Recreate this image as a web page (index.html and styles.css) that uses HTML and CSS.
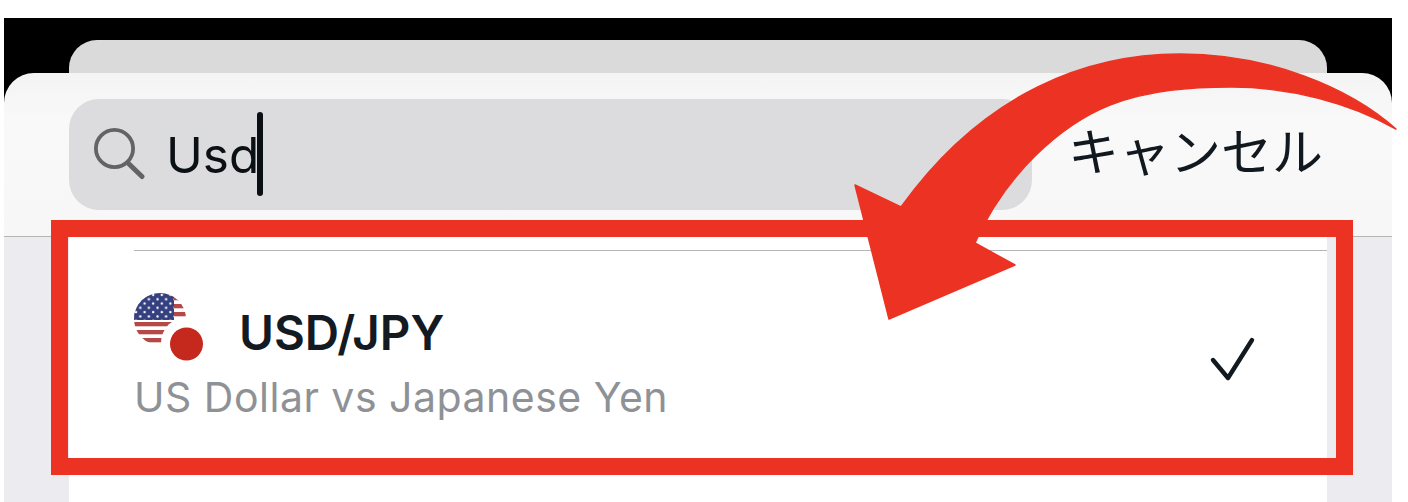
FILE: index.html
```html
<!DOCTYPE html>
<html lang="ja">
<head>
<meta charset="UTF-8" />
<meta name="viewport" content="width=device-width, initial-scale=1" />
<title>USD/JPY</title>
<link rel="stylesheet" href="styles.css">
</head>
<body>

  <div id="screen">
    <div id="back-sheet"></div>

    <div id="sheet">
      <div id="search">
        <svg class="search-icon" width="56" height="56" viewBox="0 0 56 56" aria-hidden="true">
          <circle cx="22.5" cy="24.5" r="18.6" fill="none" stroke="#636366" stroke-width="3.8" />
          <line x1="36" y1="39" x2="50" y2="52.5" stroke="#636366" stroke-width="5" stroke-linecap="round" />
        </svg>
        <span id="search-text">Usd</span>
        <span id="caret"></span>
      </div>
      <div id="cancel">キャンセル</div>
    </div>

    <div id="results">
      <div id="list">
        <div class="item">
          <div class="item-main">
            <svg class="flag" width="80" height="78" viewBox="0 0 80 78" aria-hidden="true">
              <defs>
                <clipPath id="us-clip"><circle cx="26" cy="26" r="26" /></clipPath>
                <pattern id="stars" width="8.600" height="8.600" patternUnits="userSpaceOnUse">
                  <circle cx="2" cy="2" r="1.200" fill="#fff" />
                  <circle cx="6.300" cy="6.300" r="1.200" fill="#fff" />
                </pattern>
              </defs>
              <g clip-path="url(#us-clip)">
                <rect width="52" height="52" fill="#fff" />
                <rect y="3" width="52" height="4.300" fill="#b5494a" />
                <rect y="11" width="52" height="4.300" fill="#b5494a" />
                <rect y="19" width="52" height="4.300" fill="#b5494a" />
                <rect y="29" width="52" height="4.300" fill="#b5494a" />
                <rect y="37" width="52" height="4.300" fill="#b5494a" />
                <rect y="45" width="52" height="4.300" fill="#b5494a" />
                <rect width="40" height="27" fill="#34407f" />
                <rect width="40" height="27" fill="url(#stars)" />
              </g>
              <circle cx="53" cy="50" r="26" fill="#fff" />
              <circle cx="52.500" cy="51" r="16.500" fill="#c5281c" />
            </svg>
            <span class="pair">USD/JPY</span>
          </div>
          <div class="pair-name">US Dollar vs Japanese Yen</div>
          <svg class="check" width="52" height="52" viewBox="0 0 52 52" aria-hidden="true">
            <polyline points="4,25 19,43 43,5" fill="none" stroke="#12191f" stroke-width="4.4" stroke-linecap="round" stroke-linejoin="round" />
          </svg>
        </div>
      </div>
    </div>
  </div>

  <!-- annotation drawn on top of the screenshot -->
  <div id="highlight"></div>
  <svg id="arrow" width="1408" height="502" viewBox="0 0 1408 502" aria-hidden="true">
    <path fill="#ec3323" stroke="#ec3323" stroke-width="1.500" stroke-linejoin="round" d="M1396 129 C1350 88 1270 54 1180 54 C1090 54 985 90 901 207 L855 185 L889 319 L1015 265 L975 243 C1005 175 1060 125 1110 105 C1150 90 1190 87 1232 87 C1290 87 1350 103 1396 129 Z" />
  </svg>

</body>
</html>
```

FILE: styles.css
```css
html, body {
  margin: 0;
  padding: 0;
  height: 100%;
  background: white;
  overflow: hidden;
  font-family: Inter, "Noto Sans CJK JP", sans-serif;
}

#screen {
  margin: 18px 16px 0 4px;
  height: 484px;
  background: black;
  display: flex;
  flex-direction: column;
  overflow: hidden;
}

#back-sheet {
  flex: none;
  height: 33px;
  margin: 22px 65px 0;
  background: #d9dad9;
  border-radius: 28px 28px 0 0;
}

#sheet {
  flex: none;
  box-sizing: border-box;
  height: 164px;
  padding: 26px 69px 0 65px;
  display: flex;
  align-items: flex-start;
  justify-content: space-between;
  background: linear-gradient(#f4f4f5, #f9f9f9 30%, #f7f7f8);
  border-bottom: 1px solid #b5b5b5;
  border-radius: 30px 30px 0 0;
}

#search {
  box-sizing: border-box;
  width: 963px;
  height: 111px;
  padding-left: 23px;
  display: flex;
  align-items: center;
  background: #dcdcde;
  border-radius: 30px;
}

.search-icon {
  flex: none;
  margin-top: -6px;
}

#search-text {
  margin-left: 18px;
  font-size: 49.500px;
  color: #0b1015;
}

#caret {
  width: 6px;
  height: 84px;
  margin-left: -2px;
  margin-bottom: 2px;
  background: #0b1015;
  border-radius: 3px;
}

#cancel {
  margin-top: 17px;
  font-family: "Noto Sans CJK JP", sans-serif;
  font-size: 51px;
  line-height: 66px;
  color: #11181f;
}

#results {
  flex: 1;
  padding: 0 65px;
  background: #ebebf0;
}

#list {
  height: 100%;
  padding: 13px 0 0 65px;
  box-sizing: border-box;
  background: white;
}

.item {
  position: relative;
  height: 200px;
  padding-top: 42px;
  box-sizing: border-box;
  border-top: 1px solid #b5b5b5;
}

.item-main {
  display: flex;
  align-items: center;
  height: 78px;
}

.flag {
  flex: none;
}

.pair {
  margin-left: 25px;
  margin-top: 1px;
  font-size: 47.500px;
  font-weight: 600;
  color: #141a21;
}

.pair-name {
  margin-top: 2px;
  font-size: 41px;
  line-height: 48px;
  letter-spacing: 0.5px;
  color: #8e9196;
}

.check {
  position: absolute;
  right: 66px;
  top: 84px;
}

/* red box and arrow are markup on the picture, they lie over everything */
#highlight {
  position: absolute;
  left: 51px;
  top: 220px;
  width: 1302px;
  height: 255px;
  box-sizing: border-box;
  border: 17px solid #ec3323;
}

#arrow {
  position: absolute;
  left: 0;
  top: 0;
}
```
